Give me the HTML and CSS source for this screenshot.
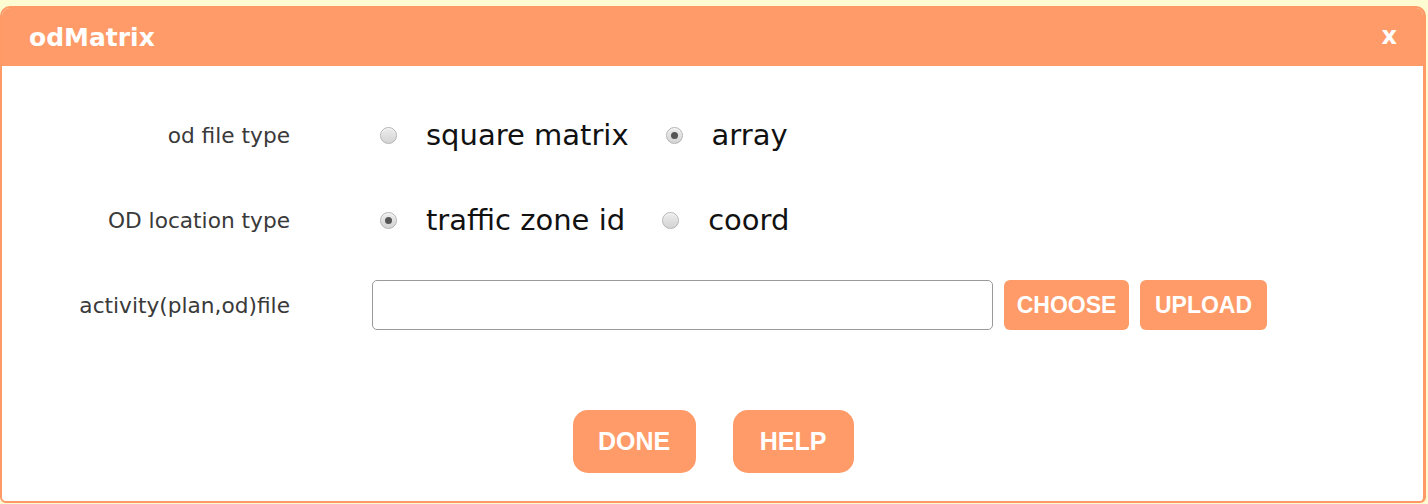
FILE: index.html
```html
<!DOCTYPE html>
<html>
<head>
<meta charset="utf-8">
<link rel="stylesheet" href="styles.css">
</head>
<body>
<div class="dialog">
  <div class="header">
    <span class="title">odMatrix</span>
    <span class="close">x</span>
  </div>
  <div class="body">
    <div class="form">
      <div class="label">od file type</div>
      <div class="field">
        <label class="opt"><span class="radio"></span><span class="opt-text">square matrix</span></label>
        <label class="opt"><span class="radio checked"></span><span class="opt-text">array</span></label>
      </div>
      <div class="label">OD location type</div>
      <div class="field">
        <label class="opt"><span class="radio checked"></span><span class="opt-text">traffic zone id</span></label>
        <label class="opt"><span class="radio"></span><span class="opt-text">coord</span></label>
      </div>
      <div class="label">activity(plan,od)file</div>
      <div class="field file-field">
        <div class="file-input"></div>
        <button class="btn small">CHOOSE</button>
        <button class="btn small">UPLOAD</button>
      </div>
    </div>
    <div class="footer">
      <button class="btn big">DONE</button>
      <button class="btn big">HELP</button>
    </div>
  </div>
</div>
</body>
</html>
```

FILE: styles.css
```css
html, body {
  margin: 0;
  padding: 0;
  background: #fdfbd2;
}
body {
  padding-top: 6px;
  font-family: "DejaVu Sans", Verdana, sans-serif;
}
.dialog {
  width: 1421px;
  height: 493px;
  border: 2px solid #ff9966;
  border-right-width: 3px;
  border-radius: 10px 10px 6px 6px;
  background: #fff;
  overflow: hidden;
  display: flex;
  flex-direction: column;
}
.header {
  height: 58px;
  background: #ff9b69;
  color: #fff;
  display: flex;
  align-items: center;
  justify-content: space-between;
  padding: 0 26px 0 27px;
  margin-top: -2px;
  padding-top: 2px;
}
.title {
  font-size: 25px;
  font-weight: bold;
}
.close {
  font-size: 24px;
  font-weight: bold;
  margin-top: -2px;
}
.body {
  padding-top: 44px;
  display: flex;
  flex-direction: column;
}
.form {
  display: grid;
  grid-template-columns: 288px 1fr;
  column-gap: 82px;
  grid-auto-rows: 50px;
  row-gap: 35px;
}
.label {
  text-align: right;
  font-size: 21.7px;
  color: #3a3a3a;
  align-self: center;
}
.field {
  display: flex;
  align-items: center;
}
.opt {
  display: flex;
  align-items: center;
  margin-right: 37px;
}
.opt:first-child {
  margin-left: 8px;
}
.radio {
  width: 15px;
  height: 15px;
  border: 1px solid #b3b3b3;
  border-radius: 50%;
  background: linear-gradient(#ececec, #d4d4d4);
  box-shadow: inset 0 1px 1px rgba(255,255,255,0.8);
  display: flex;
  align-items: center;
  justify-content: center;
  margin-right: 29px;
}
.radio.checked::after {
  content: "";
  width: 7px;
  height: 7px;
  border-radius: 50%;
  background: #555;
}
.opt-text {
  font-size: 29px;
  color: #111;
}
.file-input {
  width: 619px;
  height: 48px;
  border: 1px solid #9a9a9a;
  border-radius: 5px;
  margin-right: 11px;
}
.btn {
  border: none;
  background: #ff9b69;
  color: #fff;
  font-family: "Liberation Sans", Arial, sans-serif;
  font-weight: bold;
  padding: 0;
}
.small {
  height: 50px;
  font-size: 23px;
  border-radius: 6px;
  margin-right: 11px;
}
.small:nth-of-type(1) { width: 125px; }
.small:nth-of-type(2) { width: 127px; }
.footer {
  margin-top: 80px;
  display: flex;
  justify-content: center;
  gap: 37px;
  padding-left: 1px;
}
.big {
  width: 123px;
  height: 63px;
  border-radius: 15px;
  font-size: 25px;
}
.big + .big { width: 121px; }
```
